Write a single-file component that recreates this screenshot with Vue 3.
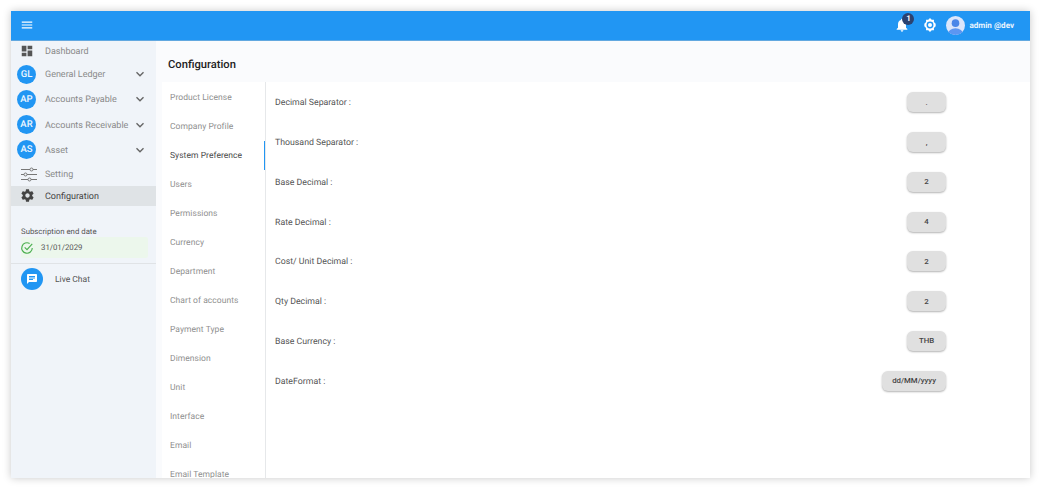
<script setup>
const tabs = ['Product License', 'Company Profile', 'System Preference', 'Users', 'Permissions', 'Currency', 'Department', 'Chart of accounts', 'Payment Type', 'Dimension', 'Unit', 'Interface', 'Email', 'Email Template']
const groups = [
  { code: 'GL', name: 'General Ledger' },
  { code: 'AP', name: 'Accounts Payable' },
  { code: 'AR', name: 'Accounts Receivable' },
  { code: 'AS', name: 'Asset' },
]
const prefs = [
  { label: 'Decimal Separator :', value: '.' },
  { label: 'Thousand Separator :', value: ',' },
  { label: 'Base Decimal :', value: '2' },
  { label: 'Rate Decimal :', value: '4' },
  { label: 'Cost/ Unit Decimal :', value: '2' },
  { label: 'Qty Decimal :', value: '2' },
  { label: 'Base Currency :', value: 'THB' },
  { label: 'DateFormat :', value: 'dd/MM/yyyy' },
]
</script>

<template>
  <div class="page">
    <div class="frame">
      <header class="topbar">
        <svg class="menu" viewBox="0 0 24 24" width="14" height="14"><path d="M3 18h18v-2H3v2zm0-5h18v-2H3v2zm0-7v2h18V6H3z" fill="#fff" /></svg>
        <div class="top-right">
          <div class="bell">
            <svg viewBox="0 0 24 24" width="16" height="16"><path d="M12 22c1.100 0 2-.9 2-2h-4c0 1.100.9 2 2 2zm6-6v-5c0-3.070-1.630-5.640-4.500-6.320V4c0-.83-.67-1.500-1.500-1.500s-1.500.67-1.500 1.500v.68C7.640 5.360 6 7.920 6 11v5l-2 2v1h16v-1l-2-2z" fill="#fff" /></svg>
            <span class="badge">1</span>
          </div>
          <svg class="gear" viewBox="0 0 24 24" width="16" height="16"><path d="M12 1.500l2.600 2.600h3.300v3.300L20.500 10v4l-2.600 2.600v3.300h-3.300L12 22.500l-2.600-2.600H6.100v-3.300L3.500 14v-4l2.600-2.600V4.100h3.300z" fill="#fff" /><circle cx="12" cy="12" r="5.200" fill="#2196f3" /><circle cx="12" cy="12" r="3" fill="#fff" /></svg>
          <svg class="avatar" viewBox="0 0 20 20" width="19" height="19"><defs><clipPath id="av"><circle cx="10" cy="10" r="10" /></clipPath></defs><g clip-path="url(#av)"><rect width="20" height="20" fill="#dbe6fb" /><circle cx="10" cy="7.500" r="4" fill="#4a86e8" /><ellipse cx="10" cy="19" rx="8" ry="6" fill="#5c96f2" /></g></svg>
          <span class="user">admin @dev</span>
        </div>
      </header>

      <div class="body">
        <aside class="sidebar">
          <div class="nav-row dash">
            <svg viewBox="0 0 24 24" width="14" height="14"><path d="M3 13h8V3H3v10zm0 8h8v-6H3v6zm10 0h8V11h-8v10zm0-18v6h8V3h-8z" fill="#555" /></svg>
            <span>Dashboard</span>
          </div>
          <div v-for="g in groups" :key="g.code" class="group">
            <span class="circle">{{ g.code }}</span>
            <span class="group-name">{{ g.name }}</span>
            <svg class="chev" viewBox="0 0 24 24" width="14" height="14"><path d="M6 9l6 6 6-6" fill="none" stroke="#666" stroke-width="2.400" /></svg>
          </div>
          <div class="nav-row setting">
            <svg viewBox="0 0 16 15" width="16" height="15" fill="none" stroke="#777" stroke-width="1"><path d="M0 2.500h9M12 2.500h4M0 7.500h3M6 7.500h10M0 12.500h7M10 12.500h6" /><circle cx="10.500" cy="2.500" r="1.500" /><circle cx="4.500" cy="7.500" r="1.500" /><circle cx="8.500" cy="12.500" r="1.500" /></svg>
            <span>Setting</span>
          </div>
          <div class="nav-row active">
            <svg viewBox="0 0 24 24" width="15" height="15"><path d="M19.430 12.980c.04-.32.070-.64.070-.98s-.03-.66-.07-.98l2.110-1.650c.19-.15.240-.42.120-.64l-2-3.460c-.12-.22-.39-.3-.61-.22l-2.490 1c-.52-.4-1.080-.73-1.690-.98l-.38-2.650C14.460 2.180 14.250 2 14 2h-4c-.25 0-.46.18-.49.42l-.38 2.650c-.61.25-1.170.59-1.690.98l-2.490-1c-.23-.09-.49 0-.61.22l-2 3.460c-.13.22-.07.49.12.64l2.110 1.650c-.04.32-.07.65-.07.98s.03.66.07.98l-2.110 1.650c-.19.15-.24.42-.12.64l2 3.460c.12.22.39.3.61.22l2.490-1c.52.4 1.080.73 1.690.98l.38 2.650c.03.24.24.42.49.42h4c.25 0 .46-.18.49-.42l.38-2.650c.61-.25 1.170-.59 1.690-.98l2.490 1c.23.09.49 0 .61-.22l2-3.460c.12-.22.07-.49-.12-.64l-2.110-1.650zM12 15.500c-1.930 0-3.500-1.570-3.500-3.500s1.570-3.500 3.500-3.500 3.500 1.570 3.500 3.500-1.570 3.500-3.500 3.500z" fill="#444" /></svg>
            <span>Configuration</span>
          </div>
          <div class="sub">
            <div class="sub-label">Subscription end date</div>
            <div class="sub-date">
              <svg viewBox="0 0 24 24" width="14" height="14" fill="none" stroke="#4caf50" stroke-width="2"><path d="M21 12a9 9 0 1 1-4.500-7.800" /><path d="M8 11l4 4 9-10" /></svg>
              <span>31/01/2029</span>
            </div>
          </div>
          <div class="chat">
            <span class="chat-btn">
              <svg viewBox="0 0 24 24" width="12" height="12"><path d="M20 2H4c-1.100 0-2 .9-2 2v18l4-4h14c1.100 0 2-.9 2-2V4c0-1.100-.9-2-2-2zM6 9h12v2H6V9zm8 5H6v-2h8v2zm4-6H6V6h12v2z" fill="#fff" /></svg>
            </span>
            <span class="chat-label">Live Chat</span>
          </div>
        </aside>

        <main class="main">
          <h1 class="title">Configuration</h1>
          <div class="panel">
            <nav class="tabs">
              <div v-for="t in tabs" :key="t" class="tab" :class="{ on: t === 'System Preference' }">{{ t }}</div>
            </nav>
            <section class="prefs">
              <div v-for="p in prefs" :key="p.label" class="pref">
                <span class="pref-label">{{ p.label }}</span>
                <button class="chip">{{ p.value }}</button>
              </div>
            </section>
          </div>
        </main>
      </div>
    </div>
  </div>
</template>

<style scoped>
.page {
  width: 1041px;
  height: 489px;
  padding: 11px;
  box-sizing: border-box;
  background: #fff;
  font-family: Roboto, "Liberation Sans", sans-serif;
  text-rendering: geometricPrecision;
  overflow: hidden;
}
.frame {
  width: 1019px;
  height: 467px;
  display: flex;
  flex-direction: column;
  overflow: hidden;
  box-shadow: 0 0 8px rgba(0, 0, 0, 0.22);
}
.topbar {
  height: 30px;
  flex: none;
  display: flex;
  align-items: center;
  justify-content: space-between;
  box-sizing: border-box;
  padding: 0 16px 1px 9px;
  background: #2196f3;
  border-bottom: 1px solid #62a8e0;
}
.top-right {
  display: flex;
  align-items: center;
}
.bell {
  position: relative;
  display: flex;
  margin-right: 12px;
}
.badge {
  position: absolute;
  top: -4px;
  left: 8px;
  width: 12px;
  height: 12px;
  border-radius: 50%;
  background: #2b4270;
  color: #fff;
  font-size: 8px;
  font-weight: 700;
  line-height: 12px;
  text-align: center;
}
.gear {
  margin-right: 8px;
}
.user {
  margin-left: 4px;
  color: #eaf4fe;
  font-size: 8.050px;
  font-weight: 700;
}
.body {
  flex: 1;
  display: flex;
  min-height: 0;
}
.sidebar {
  width: 145px;
  flex: none;
  background: #f0f4f9;
  color: #8a8a8a;
  font-size: 9px;
}
.nav-row {
  display: flex;
  align-items: center;
  gap: 11px;
  padding-left: 9px;
}
.nav-row span,
.group-name,
.chat-label,
.pref-label {
  padding-top: 2px;
}
.dash {
  height: 20.700px;
}
.setting {
  height: 23px;
  margin-top: 0.500px;
  padding-left: 10px;
  gap: 8px;
}
.active {
  height: 20px;
  background: #dfe3e6;
  color: #444;
  gap: 10px;
}
.group {
  height: 25.200px;
  display: flex;
  align-items: center;
  padding-left: 6px;
  font-size: 9px;
}
.circle {
  width: 19px;
  height: 19px;
  flex: none;
  border-radius: 50%;
  background: #2196f3;
  color: #eef7ff;
  font-size: 9.500px;
  font-weight: 500;
  line-height: 19px;
  text-align: center;
}
.group-name {
  margin-left: 9px;
  width: 87px;
  white-space: nowrap;
}
.chev {
  margin-left: 1px;
}
.sub {
  margin-top: 20.500px;
  padding: 0 8px 5px 10px;
  border-bottom: 1px solid #e0e3e6;
  margin-bottom: 4px;
}
.sub-label {
  color: #555;
  font-size: 7.800px;
  line-height: 10px;
  padding-top: 1px;
}
.sub-date {
  height: 21px;
  display: flex;
  align-items: center;
  gap: 7px;
  background: #ecf7ec;
  color: #555;
  font-size: 7.800px;
  border-radius: 2px;
}
.sub-date svg {
  margin-left: -1px;
}
.chat {
  display: flex;
  align-items: center;
  gap: 12px;
  padding-left: 10px;
  color: #555;
  font-size: 8.500px;
}
.chat-btn {
  width: 22px;
  height: 22px;
  border-radius: 50%;
  background: #2196f3;
  display: flex;
  align-items: center;
  justify-content: center;
}
.main {
  flex: 1;
  min-width: 0;
  display: flex;
  flex-direction: column;
  background: #fafbfd;
}
.title {
  height: 41px;
  flex: none;
  margin: 0;
  padding-left: 12px;
  box-sizing: border-box;
  font-size: 11.200px;
  font-weight: 500;
  line-height: 47px;
  color: #222;
}
.panel {
  flex: 1;
  min-height: 0;
  display: flex;
  margin-left: 6px;
  background: #fff;
}
.tabs {
  width: 104px;
  flex: none;
  box-sizing: border-box;
  padding-top: 0.500px;
  border-right: 1px solid #e6e8ea;
  overflow: hidden;
}
.tab {
  height: 29px;
  line-height: 31px;
  padding-left: 8px;
  color: #8f8f8f;
  font-size: 8.500px;
  letter-spacing: 0.05px;
  white-space: nowrap;
}
.tab.on {
  color: #4a4a4a;
  box-shadow: inset -1px 0 0 #2196f3;
}
.prefs {
  flex: 1;
  padding: 0.500px 84px 0 9px;
}
.pref {
  height: 39.750px;
  display: flex;
  align-items: center;
  justify-content: space-between;
  color: #555;
  font-size: 8.750px;
}
.chip {
  min-width: 39px;
  height: 20px;
  padding: 0 10px;
  border: 0;
  border-radius: 6px;
  background: #e0e0e0;
  box-shadow: 0 1px 2px rgba(0, 0, 0, 0.3);
  color: #444;
  font-family: inherit;
  font-size: 7.800px;
  font-weight: 500;
}
</style>
